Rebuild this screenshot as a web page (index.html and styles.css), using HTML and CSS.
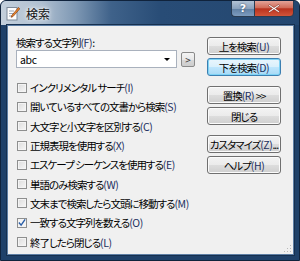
FILE: index.html
```html
<!DOCTYPE html>
<html lang="ja">
<head>
    <meta charset="UTF-8">
    <title>検索</title>
    <link rel="stylesheet" href="styles.css">
</head>
<body>
    <div class="window">
        <div class="titlebar">
            <svg class="app-icon" width="14" height="15" viewBox="0 0 14 15">
                <rect x="1" y="1.5" width="10" height="12.5" fill="#fdfdfd" stroke="#7d8a99"/>
                <line x1="3" y1="5" x2="8" y2="5" stroke="#9aa7b6"/>
                <line x1="3" y1="7.5" x2="8" y2="7.5" stroke="#9aa7b6"/>
                <line x1="3" y1="10" x2="6" y2="10" stroke="#9aa7b6"/>
                <path d="M12.5 1.5 L13.8 2.8 L7 10.5 L5.2 11.3 L5.8 9.4 Z" fill="#e8862a" stroke="#8a3d12" stroke-width="0.7"/>
            </svg>
            <span class="title">検索</span>
            <div class="caption-buttons">
                <div class="cap-btn help">?</div>
                <div class="cap-btn close">
                    <svg width="12" height="9" viewBox="0 0 12 9">
                        <path d="M1.5 0.5 L6 3.6 L10.5 0.5 L11.5 1.8 L7.5 4.5 L11.5 7.2 L10.5 8.5 L6 5.4 L1.5 8.5 L0.5 7.2 L4.5 4.5 L0.5 1.8 Z" fill="#fff" stroke="#7a2a20" stroke-width="0.6"/>
                    </svg>
                </div>
            </div>
        </div>

        <div class="client">
            <div class="main-col">
                <div class="field-label">検索する文字列<span class="key">(F)</span>:</div>
                <div class="combo-row">
                    <div class="combo">
                        <span class="combo-text">abc</span>
                        <span class="combo-arrow"></span>
                    </div>
                    <div class="mini-btn">&gt;</div>
                </div>
                <ul class="options">
                    <li class="option"><span class="check"></span>インクリメンタル&nbsp;サーチ<span class="key">(I)</span></li>
                    <li class="option"><span class="check"></span>開いているすべての文書から検索<span class="key">(S)</span></li>
                    <li class="option"><span class="check"></span>大文字と小文字を区別する<span class="key">(C)</span></li>
                    <li class="option"><span class="check"></span>正規表現を使用する<span class="key">(X)</span></li>
                    <li class="option"><span class="check"></span>エスケープ&nbsp;シーケンスを使用する<span class="key">(E)</span></li>
                    <li class="option"><span class="check"></span>単語のみ検索する<span class="key">(W)</span></li>
                    <li class="option"><span class="check"></span>文末まで検索したら文頭に移動する<span class="key">(M)</span></li>
                    <li class="option"><span class="check checked"><svg width="9" height="9" viewBox="0 0 9 9"><path d="M1 4.5 L3.5 7.5 L8 1" fill="none" stroke="#2b5fa8" stroke-width="1.6"/></svg></span>一致する文字列を数える<span class="key">(O)</span></li>
                    <li class="option"><span class="check"></span>終了したら閉じる<span class="key">(L)</span></li>
                </ul>
            </div>

            <div class="button-col">
                <div class="btn-group">
                    <div class="btn">上を検索<span class="key">(U)</span></div>
                    <div class="btn default">下を検索<span class="key">(D)</span></div>
                </div>
                <div class="btn-group">
                    <div class="btn">置換<span class="key">(R)</span>&nbsp;&gt;&gt;</div>
                    <div class="btn">閉じる</div>
                </div>
                <div class="btn-group">
                    <div class="btn">カスタマイズ<span class="key">(Z)</span>...</div>
                    <div class="btn">ヘルプ<span class="key">(H)</span></div>
                </div>
            </div>

            <div class="grip"></div>
        </div>
    </div>
</body>
</html>
```

FILE: styles.css
```css
body {
    margin: 0;
    font-family: "Noto Sans CJK JP", "Noto Sans", sans-serif;
    font-size: 10.5px;
    letter-spacing: -1px;
    font-feature-settings: "palt";
    background: #ffffff;
}
.window {
    position: relative;
    width: 300px;
    height: 261px;
    box-sizing: border-box;
    border: 1px solid #10233c;
    border-radius: 6px 6px 0 0;
    background: #1f4169;
    display: flex;
    flex-direction: column;
    overflow: hidden;
}
.titlebar {
    height: 24px;
    display: flex;
    align-items: center;
    padding-left: 5px;
    background: linear-gradient(to right, #c3cfdb 0, #b0c0d1 40px, #7d97b3 75px, #3f628a 110px, #284c76 160px, #244770 100%);
}
.app-icon {
    margin-right: 6px;
    margin-top: 1px;
}
.title {
    font-size: 12px;
    letter-spacing: 0;
    color: #111;
    text-shadow: 0 0 6px #ffffff, 0 0 3px #ffffff;
}
.caption-buttons {
    margin-left: auto;
    margin-right: 5px;
    align-self: flex-start;
    display: flex;
    margin-top: -1px;
}
.cap-btn {
    height: 17px;
    display: flex;
    align-items: center;
    justify-content: center;
    box-sizing: border-box;
    border: 1px solid #2a3c52;
}
.help {
    width: 23px;
    border-radius: 0 0 0 4px;
    border-right: none;
    background: linear-gradient(#b3c3d5, #8aa2bd 50%, #5f7fa3 51%, #7d9cbf);
    color: #fff;
    font-family: "DejaVu Sans", sans-serif;
    font-weight: bold;
    font-size: 11px;
    letter-spacing: 0;
    text-shadow: 0 0 2px #1f3550;
}
.close {
    width: 40px;
    border-radius: 0 0 4px 0;
    background: linear-gradient(#e3a398, #d06b58 45%, #b8321e 52%, #d2553a);
}
.client {
    position: relative;
    flex: 1;
    margin: 0 5px 5px 6px;
    background: #f0f0f0;
    border: 1px solid #5d7ea4;
    box-shadow: 0 0 0 1px #16304f;
    display: flex;
    padding: 10px 12px 0 8px;
}
.key {
    color: #1c2f5e;
    letter-spacing: -0.4px;
}
.main-col {
    flex: 1;
}
.field-label {
    height: 13px;
    line-height: 13px;
    margin-bottom: 1px;
}
.combo-row {
    display: flex;
    align-items: center;
}
.combo {
    width: 161px;
    height: 18px;
    box-sizing: border-box;
    background: #ffffff;
    border: 1px solid #a9b1bd;
    display: flex;
    align-items: center;
    padding: 0 6px 0 3px;
    letter-spacing: -0.3px;
}
.combo-text {
    flex: 1;
}
.combo-arrow {
    width: 0;
    height: 0;
    border-left: 3px solid transparent;
    border-right: 3px solid transparent;
    border-top: 3px solid #000;
}
.mini-btn {
    width: 14px;
    height: 15px;
    margin-left: 4px;
    box-sizing: border-box;
    border: 1px solid #8a8a8a;
    border-radius: 2px;
    background: linear-gradient(#f4f4f4, #e8e8e8 50%, #d8d8d8 51%, #cdcdcd);
    display: flex;
    align-items: center;
    justify-content: center;
    font-size: 10px;
    letter-spacing: 0;
    color: #333;
}
.options {
    list-style: none;
    margin: 10px 0 0 0;
    padding: 0;
}
.option {
    height: 19.3px;
    display: flex;
    align-items: center;
    white-space: nowrap;
}
.check {
    width: 10px;
    height: 10px;
    margin: 0 3px 0 1px;
    box-sizing: border-box;
    border: 1px solid #8e8f8f;
    background: linear-gradient(135deg, #dcdcdc, #f7f7f7);
    box-shadow: inset 0 0 0 1px #f4f4f4;
    display: flex;
    align-items: center;
    justify-content: center;
}
.check.checked {
    background: #f4f4f4;
}
.button-col {
    width: 74px;
    padding-top: 1px;
}
.btn-group {
    margin-bottom: 10px;
}
.btn {
    height: 18px;
    margin-bottom: 3px;
    box-sizing: border-box;
    border: 1px solid #707070;
    border-radius: 3px;
    background: linear-gradient(#f3f3f3, #ebebeb 50%, #dddddd 51%, #cfcfcf);
    box-shadow: inset 0 0 0 1px #fbfbfb;
    display: flex;
    align-items: center;
    justify-content: center;
    white-space: nowrap;
    color: #000;
}
.btn.default {
    border-color: #3c7fb1;
    background: linear-gradient(#eaf6fd, #d9f0fc 50%, #bee6fd 51%, #a7d9f5);
    box-shadow: inset 0 0 0 1px #7ed3f5;
}
.grip {
    position: absolute;
    right: 2px;
    bottom: 2px;
    width: 8px;
    height: 8px;
    background: radial-gradient(circle, #b8b8b8 0.7px, transparent 1px) 0 0 / 3px 3px;
    clip-path: polygon(100% 0, 100% 100%, 0 100%);
}
```
